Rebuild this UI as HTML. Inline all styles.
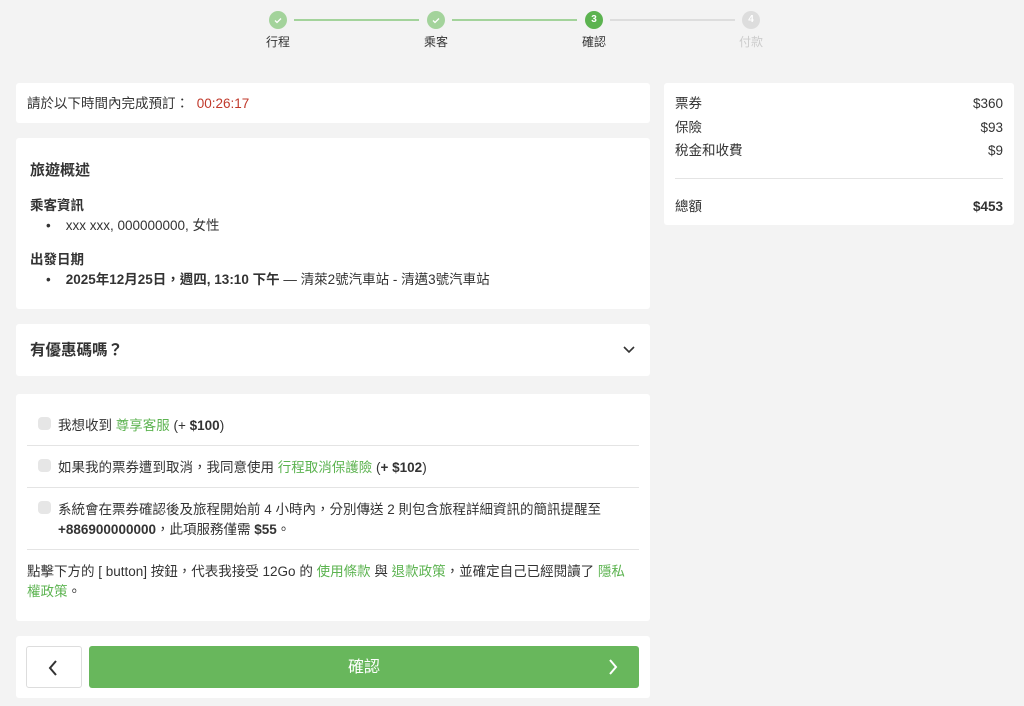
<!DOCTYPE html>
<html><head><meta charset="utf-8"><style>
*{box-sizing:border-box;margin:0;padding:0}
body{width:1024px;height:706px;background:#f3f3f3;font-family:"Liberation Sans","Noto Sans CJK TC",sans-serif;color:#333;font-size:14px;position:relative;overflow:hidden;line-height:1.2}
.card{position:absolute;background:#fff;border-radius:3px}
.a{position:absolute;line-height:18px}
.g{color:#5cb350}
.dot{position:absolute;width:18px;height:18px;border-radius:50%;top:11px;color:#fff;font-size:10px;font-weight:bold;text-align:center;line-height:18px}
.line{position:absolute;top:19px;height:2px}
.lbl{position:absolute;top:34px;font-size:12px;line-height:16px}
.cb{position:absolute;left:22px;width:13px;height:13px;border-radius:4px;background:#e6e6e6}
.hr{position:absolute;left:11px;right:11px;height:1px;background:#e4e4e4}
</style></head><body>
<div class="dot" style="left:269px;background:#a3d39b"><svg width="18" height="18"><path d="M6 9.5l2 2 4-4" fill="none" stroke="#fff" stroke-width="1.3"/></svg></div>
<div class="line" style="left:294px;width:125px;background:#a3d39b"></div>
<div class="dot" style="left:427px;background:#a3d39b"><svg width="18" height="18"><path d="M6 9.5l2 2 4-4" fill="none" stroke="#fff" stroke-width="1.3"/></svg></div>
<div class="line" style="left:452px;width:125px;background:#a3d39b"></div>
<div class="dot" style="left:585px;background:#5cb350">3</div>
<div class="line" style="left:610px;width:125px;background:#ddd"></div>
<div class="dot" style="left:742px;background:#ddd">4</div>
<div class="lbl" style="left:266px">行程</div>
<div class="lbl" style="left:424px">乘客</div>
<div class="lbl" style="left:582px">確認</div>
<div class="lbl" style="left:739px;color:#ccc">付款</div>

<div class="card" style="left:16px;top:83px;width:634px;height:40px">
<div class="a" style="left:11px;top:12px;font-size:13.5px">請於以下時間內完成預訂： <span style="color:#c0392b;margin-left:4px">00:26:17</span></div></div>

<div class="card" style="left:16px;top:138px;width:634px;height:171px">
<div class="a" style="left:14px;top:24px;font-size:15px;font-weight:bold">旅遊概述</div>
<div class="a" style="left:14px;top:59px;font-size:13.5px;font-weight:bold">乘客資訊</div>
<div class="a" style="left:30px;top:79px;font-size:13.5px">•&nbsp;&nbsp;&nbsp;&nbsp;xxx xxx, 000000000, 女性</div>
<div class="a" style="left:14px;top:113px;font-size:13.5px;font-weight:bold">出發日期</div>
<div class="a" style="left:30px;top:133px;font-size:13.5px">•&nbsp;&nbsp;&nbsp;&nbsp;<b>2025年12月25日，週四, 13:10 下午</b> — 清萊2號汽車站 - 清邁3號汽車站</div></div>

<div class="card" style="left:16px;top:324px;width:634px;height:52px">
<div class="a" style="left:14px;top:18px;font-size:15.5px;font-weight:bold">有優惠碼嗎？</div>
<svg class="a" style="left:607px;top:21px" width="12" height="10"><path d="M1 2l5 5 5-5" fill="none" stroke="#333" stroke-width="1.6"/></svg></div>

<div class="card" style="left:16px;top:394px;width:634px;height:227px;font-size:13.5px">
<div class="cb" style="top:23px"></div>
<div class="a" style="left:42px;top:23px">我想收到 <span class="g">尊享客服</span> (+ <b>$100</b>)</div>
<div class="hr" style="top:51px"></div>
<div class="cb" style="top:65px"></div>
<div class="a" style="left:42px;top:65px">如果我的票券遭到取消，我同意使用 <span class="g">行程取消保護險</span> (<b>+ $102</b>)</div>
<div class="hr" style="top:93px"></div>
<div class="cb" style="top:107px"></div>
<div class="a" style="left:42px;top:106px;line-height:20px">系統會在票券確認後及旅程開始前 4 小時內，分別傳送 2 則包含旅程詳細資訊的簡訊提醒至<br><b>+886900000000</b>，此項服務僅需 <b>$55</b>。</div>
<div class="hr" style="top:155px"></div>
<div class="a" style="left:11px;top:168px;line-height:20px;width:606px">點擊下方的 [ button] 按鈕，代表我接受 12Go 的 <span class="g">使用條款</span> 與 <span class="g">退款政策</span>，並確定自己已經閱讀了 <span class="g">隱私權政策</span>。</div></div>

<div class="card" style="left:16px;top:636px;width:634px;height:62px">
<div class="a" style="left:10px;top:10px;width:56px;height:42px;border:1px solid #ddd;border-radius:3px"><svg style="position:absolute;left:20px;top:12px" width="12" height="18"><path d="M9 2L3 9l6 7" fill="none" stroke="#333" stroke-width="2"/></svg></div>
<div class="a" style="left:73px;top:10px;width:550px;height:42px;background:#68b75c;border-radius:3px;color:#fff;font-size:16px;text-align:center;line-height:44px">確認<svg style="position:absolute;right:20px;top:12px" width="12" height="18"><path d="M3 2l6 7-6 7" fill="none" stroke="#fff" stroke-width="2"/></svg></div></div>

<div class="card" style="left:664px;top:83px;width:350px;height:142px;font-size:13.5px">
<div class="a" style="left:11px;top:12px">票券</div><div class="a" style="right:11px;top:12px">$360</div>
<div class="a" style="left:11px;top:36px">保險</div><div class="a" style="right:11px;top:36px">$93</div>
<div class="a" style="left:11px;top:59px">稅金和收費</div><div class="a" style="right:11px;top:59px">$9</div>
<div class="hr" style="top:95px"></div>
<div class="a" style="left:11px;top:115px">總額</div><div class="a" style="right:11px;top:115px;font-weight:bold">$453</div></div>
</body></html>
